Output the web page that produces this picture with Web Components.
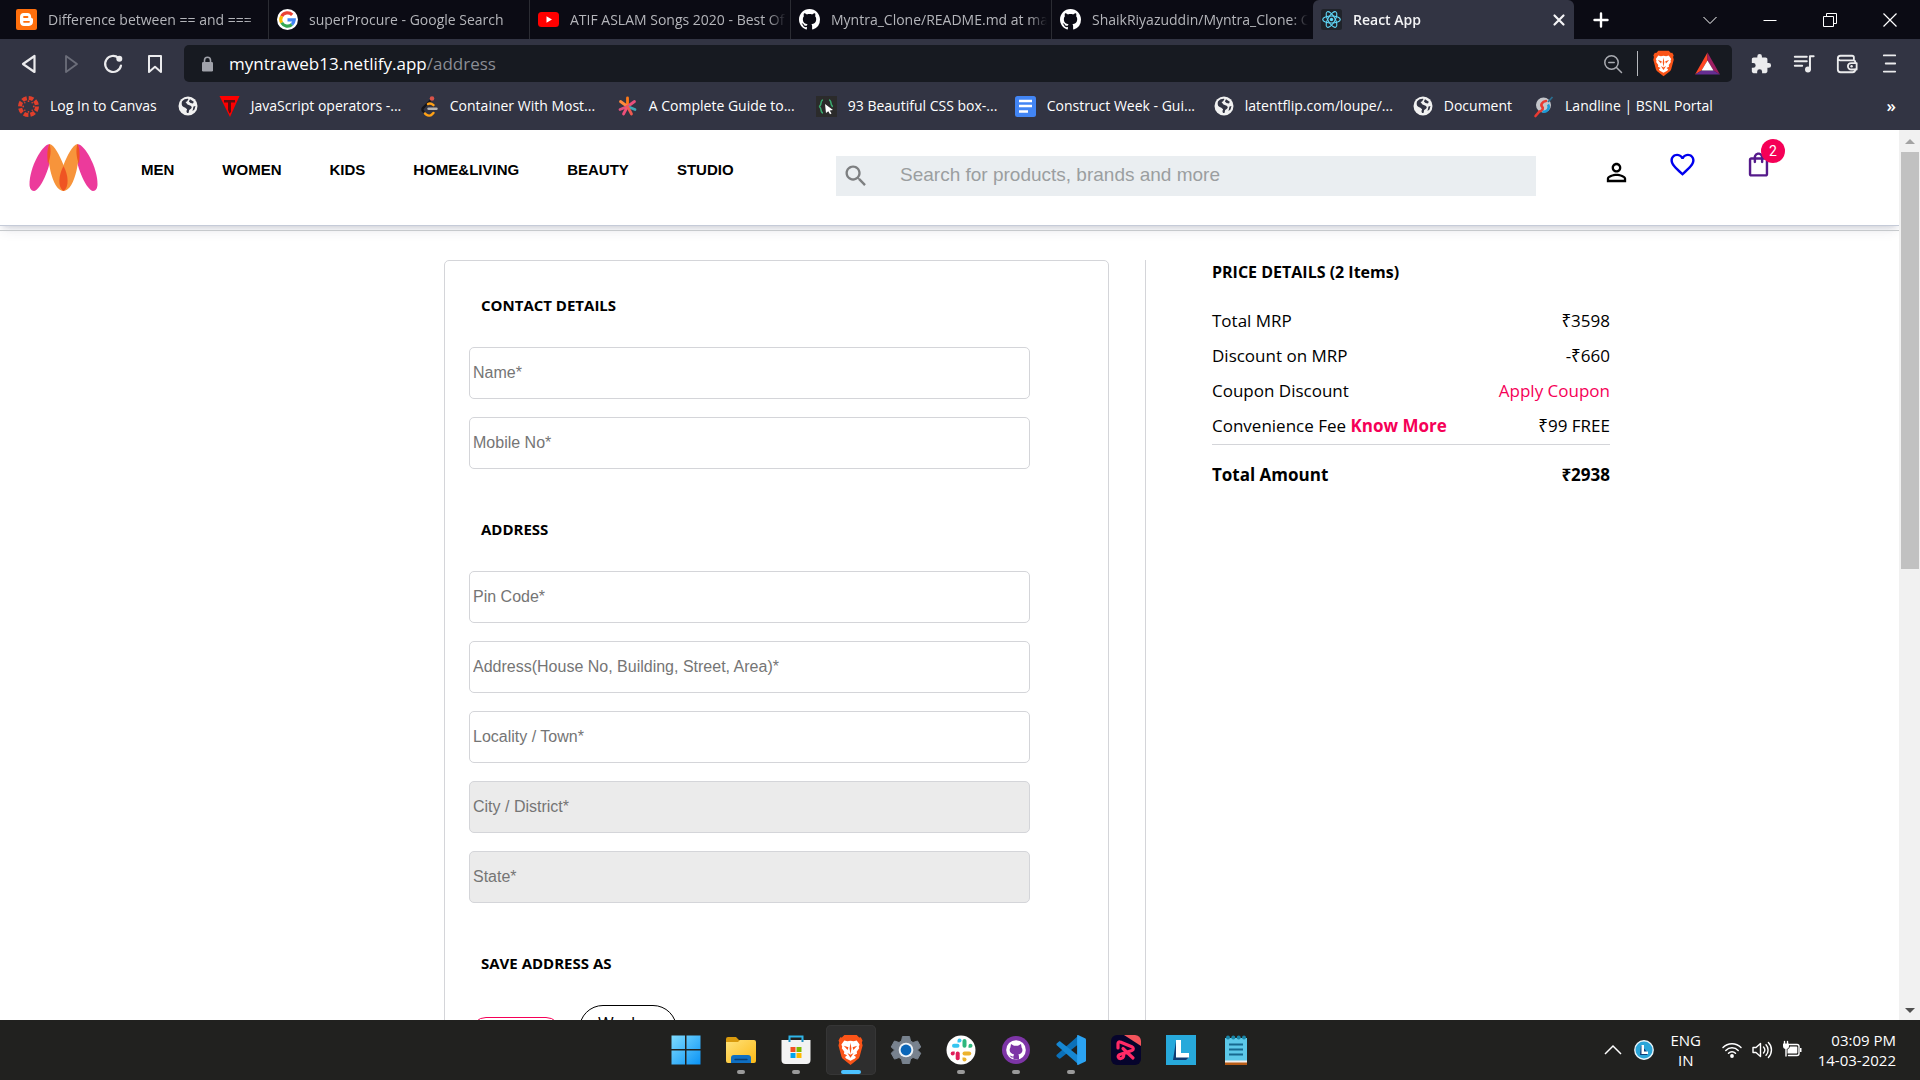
<!DOCTYPE html>
<html lang="en">
<head>
<meta charset="utf-8">
<title>React App</title>
<style>
  html, body { margin: 0; height: 100%; }
  body { font-family: "Open Sans", "Noto Sans", sans-serif; overflow: hidden; background: #fff; }
</style>
</head>
<body>
<desktop-screen></desktop-screen>
<script>
const githubPath = 'M8 0C3.58 0 0 3.58 0 8c0 3.54 2.29 6.53 5.47 7.59.4.07.55-.17.55-.38 0-.19-.01-.82-.01-1.49-2.01.37-2.53-.49-2.69-.94-.09-.23-.48-.94-.82-1.13-.28-.15-.68-.52-.01-.53.63-.01 1.08.58 1.23.82.72 1.21 1.87.87 2.33.66.07-.52.28-.87.51-1.07-1.78-.2-3.64-.89-3.64-3.95 0-.87.31-1.59.82-2.15-.08-.2-.36-1.02.08-2.12 0 0 .67-.21 2.2.82.64-.18 1.32-.27 2-.27.68 0 1.36.09 2 .27 1.53-1.04 2.2-.82 2.2-.82.44 1.1.16 1.92.08 2.12.51.56.82 1.27.82 2.15 0 3.07-1.87 3.75-3.65 3.95.29.25.54.73.54 1.48 0 1.07-.01 1.93-.01 2.2 0 .21.15.46.55.38A8.013 8.013 0 0016 8c0-4.42-3.58-8-8-8z';
const line = 'fill="none" stroke="currentColor" stroke-linejoin="round" stroke-linecap="round"';
const slackMark = `
  <path d="M11.5 5.5a2 2 0 1 1 2 2h-2z" fill="#36c5f0"/><rect x="6" y="8.700" width="7.500" height="4" rx="2" fill="#36c5f0"/>
  <path d="M22.500 10.700a2 2 0 1 1 2 2h-2z" fill="#2eb67d"/><rect x="16.500" y="4" width="4" height="8.700" rx="2" fill="#2eb67d"/>
  <path d="M18.500 22.500a2 2 0 1 1-2 2v-2z" fill="#ecb22e"/><rect x="16.500" y="16.500" width="8.700" height="4" rx="2" fill="#ecb22e"/>
  <path d="M8.700 16.500v2a2 2 0 1 1-2-2z" fill="#e01e5a"/><rect x="9.700" y="16.500" width="4" height="8.700" rx="2" fill="#e01e5a"/>`;
const globe = `<circle cx="10" cy="10" r="9.500" fill="#f1f1f1"/>
  <path d="M4 5.500C6 3 9 2.500 10.500 3L9 5.500 7.500 6 9.500 8.500l2.500 1c1.500.6 2.500 2 1 3.300l-1.800 1.200-.7 3c-1.500.4-2-.6-2-2l.6-1.800L7 11.500C4.500 11 3 9 4 5.500z" fill="#323443"/>
  <path d="M12 3.300l3.800 2.400-.8 1.800-2.500-.4-1.600-1.600zM15.500 10.500l2-.4-1 3.500-2 1.500z" fill="#323443"/>`;
const lion = `<path d="M12 0h6.500l2.600 2.500 1.700-.3 1.800 3-.7 2 .8 3-3.200 10.800c-.3 1-1 1.800-2 2.500L12 29l-7.500-5.500c-1-.7-1.700-1.500-2-2.500L-.700 10.200l.8-3-.7-2 1.800-3 1.700.3L5.500 0z" transform="translate(1 0) scale(.92 1)" fill="#fb5418"/>
  <path d="M12 5.500l3 .6 3-.8 2.800 4-.8 2 .4 1.600-2.400 3.400.3 1.800-3 1.500 2 1.600-1 1.500L12 25l-4.300-2.300-1-1.500 2-1.600-3-1.500.3-1.800-2.400-3.400.4-1.600-.8-2 2.800-4 3 .8z" fill="#fff"/>
  <path d="M5.500 10.500l4.500 1.300-.8 2.600zM18.500 10.500L14 11.800l.8 2.600zM12 7.500l.9 5.500-.9 5.500-.9-5.500zM9 17.300l3 1.700 3-1.700-2.200 3.400L12 22l-.8-1.300z" fill="#fb5418"/>`;

const icons = {
  blogger: ['0 0 21 21', `<rect width="21" height="21" rx="2" fill="#ff6f0c"/><path d="M7.500 4h4c2.400 0 3.600 1.600 3.600 3.500 0 1 .2 1.500 1 1.700.6.100.9.500.9 1.100v2.500c0 2.300-1.700 4.200-4 4.200H8c-2.300 0-4-1.800-4-4.100V7.800C4 5.600 5.500 4 7.500 4z" fill="#fff"/><path d="M8 8h3.500M8 12.800h5" stroke="#ff6f0c" stroke-width="1.800" stroke-linecap="round"/>`],
  google: ['0 0 21 21', `<circle cx="10.500" cy="10.500" r="10.500" fill="#fff"/><g fill="none" stroke-width="3.200"><path d="M15.200 5.800A6.700 6.700 0 0 0 4.700 7.200" stroke="#ea4335"/><path d="M4.700 7.200a6.700 6.700 0 0 0 0 6.600" stroke="#fbbc05"/><path d="M4.700 13.800a6.700 6.700 0 0 0 10.200 1.700" stroke="#34a853"/><path d="M14.900 15.500a6.700 6.700 0 0 0 2.300-4.600h-6.700" stroke="#4285f4"/></g>`],
  youtube: ['0 0 21 21', `<rect y="3" width="21" height="15" rx="3.500" fill="#f00"/><path d="M8.500 7.200l5.500 3.300-5.500 3.300z" fill="#fff"/>`],
  github: ['0 0 16 16', `<path fill="#fff" d="${githubPath}"/>`],
  react: ['0 0 21 21', `<rect width="21" height="21" rx="2.500" fill="#20232a"/><g fill="none" stroke="#61dafb" stroke-width="1.100"><ellipse cx="10.500" cy="10.500" rx="8.800" ry="3.500"/><ellipse cx="10.500" cy="10.500" rx="8.800" ry="3.500" transform="rotate(60 10.500 10.500)"/><ellipse cx="10.500" cy="10.500" rx="8.800" ry="3.500" transform="rotate(120 10.500 10.500)"/></g><circle cx="10.500" cy="10.500" r="1.700" fill="#61dafb"/>`],
  close: ['0 0 12 12', `<path ${line} stroke-width="2.200" d="M1.500 1.500l9 9M10.500 1.500l-9 9"/>`],
  plus: ['0 0 16 16', `<path ${line} stroke-width="2.400" d="M8 1.500v13M1.500 8h13"/>`],
  down: ['0 0 14 14', `<path fill="none" stroke="currentColor" d="M.5 4l6.500 6.500L13.500 4"/>`],
  minimise: ['0 0 14 14', `<path fill="none" stroke="currentColor" d="M.5 7.500h13"/>`],
  restore: ['0 0 14 14', `<path fill="none" stroke="currentColor" d="M.5 3.500h10v10H.5zM3.500 3V.5h10v10H11"/>`],
  exit: ['0 0 14 14', `<path fill="none" stroke="currentColor" stroke-width="1.200" d="M.5.5l13 13M13.500.5l-13 13"/>`],
  back: ['0 0 20 20', `<path ${line} stroke-width="2.200" d="M15.500 2v16L4 10z"/>`],
  forward: ['0 0 20 20', `<path ${line} stroke-width="1.800" d="M5 2v16l11-8z"/>`],
  reload: ['0 0 20 20', `<path ${line} stroke-width="2.200" d="M15.500 4A8 8 0 1 0 18 11.500"/><circle cx="16.300" cy="4.700" r="3" fill="currentColor"/>`],
  mark: ['0 0 20 20', `<path ${line} stroke-width="2" d="M4 2h12v16l-6-5.200L4 18z"/>`],
  lock: ['0 0 13 16', `<rect x="1" y="6" width="11" height="9.500" rx="1.200" fill="currentColor"/><path d="M3.500 6.500V4.300a3 3 0 0 1 6 0v2.200" fill="none" stroke="currentColor" stroke-width="1.600"/>`],
  zoomout: ['0 0 20 20', `<g ${line} stroke-width="1.500"><circle cx="8.500" cy="8.500" r="6.700"/><path d="M5.800 8.500h5.400M13.500 13.500l5 5"/></g>`],
  brave: ['0 0 24 29', lion],
  bat: ['0 0 25 22', `<path d="M12.500 0L0 22l6.500-4 6-10z" fill="#ff4724"/><path d="M12.500 0L25 22l-6.500-4-6-10z" fill="#9e1f63"/><path d="M0 22h25l-6.500-4h-12z" fill="#662d91"/><path d="M12.500 8l6 10h-12z" fill="#fff"/>`],
  puzzle: ['0 0 24 24', `<path fill="currentColor" d="M20.500 11H19V7c0-1.100-.9-2-2-2h-4V3.500a2.500 2.500 0 0 0-5 0V5H4c-1.100 0-2 .9-2 2v3.800h1.500a2.700 2.700 0 0 1 0 5.400H2V20c0 1.100.9 2 2 2h3.800v-1.500a2.700 2.700 0 0 1 5.400 0V22H17c1.100 0 2-.9 2-2v-4h1.500a2.500 2.500 0 0 0 0-5z"/>`],
  music: ['0 0 24 24', `<path ${line} stroke-width="2.200" d="M2 4h13M2 9h13M2 14h8M18.500 18V3.500h4"/><circle cx="16.300" cy="18" r="3.200" fill="currentColor"/>`],
  wallet: ['0 0 24 24', `<g ${line} stroke-width="2"><path d="M19.500 8V5a2 2 0 0 0-2-2H5a3 3 0 0 0-3 3v12a3 3 0 0 0 3 3h13a3 3 0 0 0 3-3M2 6A2.500 2.500 0 0 0 4.500 8H19a2 2 0 0 1 2 2v1"/><path d="M22.500 11h-6a3.500 3.500 0 0 0 0 7h6z"/></g><circle cx="17" cy="14.500" r="1.300" fill="currentColor"/>`],
  menu: ['0 0 20 20', `<path ${line} stroke-width="1.900" d="M4 1.500h12M6 10h10M4 18.500h12"/>`],
  canvas: ['0 0 21 21', `<circle cx="10.500" cy="10.500" r="8.500" fill="none" stroke="#e13f2b" stroke-width="4" stroke-dasharray="4.700 1.970"/><g fill="#e13f2b"><circle cx="10.500" cy="5.200" r=".9"/><circle cx="10.500" cy="15.800" r=".9"/><circle cx="5.200" cy="10.500" r=".9"/><circle cx="15.800" cy="10.500" r=".9"/><circle cx="6.800" cy="6.800" r=".8"/><circle cx="14.200" cy="6.800" r=".8"/><circle cx="6.800" cy="14.200" r=".8"/><circle cx="14.200" cy="14.200" r=".8"/></g>`],
  globe: ['0 0 20 20', globe],
  tee: ['0 0 21 21', `<path d="M.5 0h20L11 21z" fill="#f00"/><path d="M5 4h11v2.500h-4V16L10.500 17.500 9 14V6.500H5z" fill="#5d0d10"/>`],
  leet: ['0 0 21 21', `<g fill="none" stroke-linecap="round" stroke-width="2.400"><path d="M12 5L5 12" stroke="#15161c"/><path d="M5 12c-1.200 1.300-.5 2.700.6 3.700" stroke="#15161c"/><path d="M7 17.500l1.500 1.300c1.500 1.200 4 1.200 5.500-.4l1.500-1.500" stroke="#ffa116"/><path d="M10 8c1.500-1 3.500-.6 5.500 1.200" stroke="#ffa116"/><path d="M10.500 12.800h8" stroke="#b3b3b3"/></g><circle cx="14" cy="2.500" r="2.300" fill="#d9534a"/>`],
  star: ['0 0 21 21', `<g stroke-width="2.800" stroke-linecap="round"><path d="M10.500 2v7" stroke="#ff7a18"/><path d="M10.500 10.500L3.500 5.500" stroke="#ff8a3c"/><path d="M10.500 10.500l7-5" stroke="#e94f7c"/><path d="M10.500 10.500l-7.500 3" stroke="#d9527c"/><path d="M10.500 10.500l7.500 3" stroke="#3fa7b5"/><path d="M10.500 10.500L6.500 18" stroke="#f0507a"/><path d="M10.500 10.500l4 7.500" stroke="#ef5a50"/></g>`],
  braces: ['0 0 21 21', `<rect width="21" height="21" fill="#2b2b2b"/><g fill="none" stroke="#3aa76d" stroke-width="1.500"><path d="M7 4C4 4 6 10 3 10.500 6 11 4 17 7 17M13 4c3 0 1 6 4 6.500"/></g><path d="M9 8l8 6-3.300.5 1.800 3-1.500.8-1.700-3L10 17z" fill="#fff"/>`],
  docs: ['0 0 21 21', `<rect width="21" height="21" rx="2.500" fill="#4285f4"/><path d="M4 5h13M4 10h13M4 15.500h9" stroke="#fff" stroke-width="2.300"/>`],
  bsnl: ['0 0 21 21', `<circle cx="10.500" cy="9" r="7.500" fill="#c3c5ca"/><path d="M13 5C9 5.500 7.500 9 9 10.500s1 4-2.500 5L2.500 20" fill="none" stroke="#e83a32" stroke-width="2.600" stroke-linecap="round"/><path d="M9.500 15.500c4 1 8-3 5.500-7" fill="none" stroke="#1b9ad6" stroke-width="2.400"/><path d="M15 6l4.500-5" stroke="#2b6f91" stroke-width="1.800"/>`],
  myntra: ['0 0 68 47', `<g><path d="M20 0C12 1 0 24 0 40c0 4 1.500 7 4.500 7C10 47 21 25 21.500 9 21.500 4 21 1 20 0z" fill="#ec3a9b"/><path d="M48 0c8 1 20 24 20 40 0 4-1.500 7-4.500 7C58 47 47 25 46.500 9 46.500 4 47 1 48 0z" fill="#ec3a9b"/><path d="M20 0c-4 9 2 47 14 47 5-1 6-17 0-26C30 11 25 1 20 0z" fill="#f7943b"/><path d="M48 0c4 9-2 47-14 47-5-1-6-17 0-26C38 11 43 1 48 0z" fill="#f7943b"/><path d="M20 0c-2.500 5-2.500 11-1.500 20 2.500-6 3.500-14 1.500-20zM48 0c2.500 5 2.500 11 1.500 20C47 14 46 6 48 0zM34 22c-5 9-6 21 0 25 6-4 5-16 0-25z" fill="#ef5423"/></g>`],
  search: ['0 0 24 24', `<path fill="currentColor" d="M15.500 14h-.79l-.28-.27C15.410 12.590 16 11.110 16 9.500 16 5.910 13.090 3 9.500 3S3 5.910 3 9.500 5.910 16 9.500 16c1.610 0 3.090-.59 4.230-1.570l.27.28v.79l5 4.990L20.490 19l-4.990-5zm-6 0C7.010 14 5 11.990 5 9.500S7.010 5 9.500 5 14 7.010 14 9.500 11.990 14 9.500 14z"/>`],
  person: ['0 0 24 24', `<path fill="currentColor" d="M12 5.900c1.160 0 2.100.94 2.100 2.100s-.94 2.100-2.100 2.100S9.900 9.160 9.900 8s.94-2.100 2.100-2.100m0 9c2.970 0 6.100 1.460 6.100 2.100v1.100H5.900V17c0-.64 3.130-2.100 6.100-2.100M12 4C9.790 4 8 5.790 8 8s1.790 4 4 4 4-1.790 4-4-1.790-4-4-4zm0 9c-2.670 0-8 1.340-8 4v3h16v-3c0-2.660-5.330-4-8-4z"/>`],
  heart: ['0 0 24 24', `<path fill="currentColor" d="M16.500 3c-1.740 0-3.410.81-4.500 2.090C10.910 3.810 9.240 3 7.500 3 4.420 3 2 5.420 2 8.500c0 3.780 3.400 6.860 8.550 11.540L12 21.350l1.450-1.320C18.600 15.360 22 12.280 22 8.500 22 5.420 19.580 3 16.500 3zm-4.400 15.550l-.1.100-.1-.1C7.140 14.240 4 11.390 4 8.500 4 6.500 5.500 5 7.500 5c1.540 0 3.040.99 3.570 2.360h1.870C13.460 5.990 14.960 5 16.500 5c2 0 3.500 1.500 3.500 3.500 0 2.890-3.140 5.740-7.900 10.050z"/>`],
  bag: ['0 0 24 24', `<path fill="currentColor" d="M18 6h-2c0-2.210-1.790-4-4-4S8 3.790 8 6H6c-1.100 0-2 .9-2 2v12c0 1.100.9 2 2 2h12c1.100 0 2-.9 2-2V8c0-1.100-.9-2-2-2zm-6-2c1.100 0 2 .9 2 2h-4c0-1.100.9-2 2-2zm6 16H6V8h2v2c0 .55.45 1 1 1s1-.45 1-1V8h4v2c0 .55.45 1 1 1s1-.45 1-1V8h2v12z"/>`],
  windows: ['0 0 30 30', `<defs><linearGradient id="w" x1="0" y1="0" x2="1" y2="1"><stop offset="0" stop-color="#7fdcff"/><stop offset="1" stop-color="#0a93f5"/></linearGradient></defs><path d="M.5.5H14V14H.5zM15.500.5H29.500V14H15.500zM.5 15.500H14V29.500H.5zM15.500 15.500H29.500V29.500H15.500z" fill="url(#w)"/>`],
  folder: ['0 0 30 30', `<path d="M0 4a2 2 0 0 1 2-2h8l3 3h12v8H0z" fill="#d99a0d"/><defs><linearGradient id="f" x1="0" y1="0" x2="1" y2="1"><stop offset="0" stop-color="#ffe27a"/><stop offset="1" stop-color="#fbb916"/></linearGradient></defs><path d="M0 7h12l2-2h14a2 2 0 0 1 2 2v19a2 2 0 0 1-2 2H2a2 2 0 0 1-2-2z" fill="url(#f)"/><path d="M5 28v-5a3 3 0 0 1 3-3h14a3 3 0 0 1 3 3v5z" fill="#0f6fc2"/><path d="M9 24.500h12" stroke="#083f73" stroke-width="1.300" stroke-linecap="round"/>`],
  store: ['0 0 30 30', `<path d="M8.500 7V1.500h13V7" fill="none" stroke="#2fb5e8" stroke-width="2"/><path d="M.5 5h29v20a4 4 0 0 1-4 4h-21a4 4 0 0 1-4-4z" fill="#f3f3f3"/><path d="M9.500 12h5v5h-5z" fill="#f25022"/><path d="M15.500 12h5v5h-5z" fill="#7fba00"/><path d="M9.500 18h5v5h-5z" fill="#00a4ef"/><path d="M15.500 18h5v5h-5z" fill="#ffb900"/><path d="M8.500 4.500V7M21.500 4.500V7" stroke="#1c8fc2" stroke-width="2"/>`],
  gear: ['0 0 30 30', `<path d="M11.500 1.500h7l1 4.500 2.500 1.500L26.500 6l3.300 6-3.400 3 3.400 3.200-3.300 5.900L22 22.500 19.500 24l-1 4.500h-7l-1-4.500L8 22.500l-4.500 1.600L.2 18.200 3.600 15 .2 12l3.300-6L8 7.500 10.500 6z" fill="#78828e" stroke="#78828e" stroke-linejoin="round"/><circle cx="15" cy="15" r="7.300" fill="#eef3f7"/><circle cx="15" cy="15" r="5.400" fill="#0a66b8"/>`],
  slack: ['0 0 30 30', `<circle cx="15" cy="15" r="14.500" fill="#fff"/>${slackMark}`],
  ghdesk: ['0 0 30 30', `<circle cx="15" cy="15" r="14" fill="#7d35a6"/><circle cx="15" cy="15" r="9.800" fill="#fff"/><path d="M10 9l3 1.700h4L20 9l.6 3.500c2 3 .3 6.500-3.300 7 .8 1 .7 2 .7 5h-5.500v-2c-2.500.5-2.800-1-4-2 1.500-.3 2 1.300 4 1 0-.8.2-1.500.6-2-4-.6-5.500-4-3.700-7z" fill="#7d35a6"/>`],
  vscode: ['0 0 30 30', `<path d="M22 1L1 19.500c-.8.7-.8 1.500-.1 2.200l1.800 1.600c.6.500 1.300.5 1.900 0L22 9.500z" fill="#0b70b8"/><path d="M22 29L1 10.500c-.8-.7-.8-1.500-.1-2.200l1.800-1.600c.6-.5 1.300-.5 1.900 0L22 20.500z" fill="#1687d2"/><path d="M22 0l7 3.300c.6.300 1 .8 1 1.500v20.400c0 .7-.4 1.200-1 1.500L22 30c-.6.200-.9-.2-.9-.8V.8c0-.6.300-1 .9-.8z" fill="#2ba3f2"/>`],
  recorder: ['0 0 30 30', `<rect width="30" height="30" rx="6" fill="#06042c"/><path d="M13 0h11a6 6 0 0 1 6 6v5z" fill="#f3545b"/><path d="M7 13V8.500c0-1.500 1-2 2.300-1.400l11.500 4.600c2 1 2 3 0 3.800L9 19.500c-3 1.300-2 4.500 1 4 3-.6 3-3 2.500-5M12 13.500l10 9.500" fill="none" stroke="#ff2a66" stroke-width="3.200" stroke-linecap="round" stroke-linejoin="round"/>`],
  ell: ['0 0 30 30', `<path d="M0 0h30v30H0z" fill="#27a9db"/><path d="M10 6L7 25h13l3-3-11-1z" fill="#103b73"/><path d="M10 5h5v13h8v4.500H10z" fill="#fff"/>`],
  notepad: ['0 0 30 30', `<path d="M4 26h22v4H4z" fill="#b85c16"/><path d="M4 25h22v2.500H4z" fill="#eee"/><path d="M4 3h22v22.500H4z" fill="#5cc8e8"/><path d="M8 9.500h14M8 14.500h14M8 19.500h14" stroke="#17698f" stroke-width="1.800"/><g fill="#1a86a8"><circle cx="7" cy="2.500" r="2"/><circle cx="12.300" cy="2.500" r="2"/><circle cx="17.700" cy="2.500" r="2"/><circle cx="23" cy="2.500" r="2"/></g>`],
  up: ['0 0 18 18', `<path fill="none" stroke="currentColor" stroke-width="1.500" d="M1 13l8-8 8 8"/>`],
  ellring: ['0 0 20 20', `<circle cx="10" cy="10" r="9.200" fill="#2aa5d8" stroke="#e8f4fa" stroke-width="1.400"/><path d="M7 5l-1 10h7l1-2z" fill="#123c74"/><path d="M7.500 5H10v6.500h4V14H7.500z" fill="#fff"/>`],
  wifi: ['0 0 20 20', `<g ${line} stroke-width="1.500"><path d="M1 7.500a12.500 12.500 0 0 1 18 0M3.800 10.500a8.600 8.600 0 0 1 12.400 0M6.500 13.300a5 5 0 0 1 7 0"/></g><circle cx="10" cy="16" r="1.900" fill="currentColor"/>`],
  volume: ['0 0 20 20', `<g ${line} stroke-width="1.400"><path d="M1 7.500h3L8.500 3.500v13L4 12.500H1zM11.500 7a4.500 4.500 0 0 1 0 6M14 4.800a7.500 7.500 0 0 1 0 10.400M16.400 2.600a10.500 10.500 0 0 1 0 14.800"/></g>`],
  battery: ['0 0 20 20', `<path ${line} stroke-width="1.400" d="M7.500 4.500H15a2 2 0 0 1 2 2v7a2 2 0 0 1-2 2H6.500"/><path d="M8 6.500h6.500a.8.800 0 0 1 .8.800v5.400a.8.800 0 0 1-.8.800H5.500V9.500A4 4 0 0 0 8 6.500zM18 8h1.500v4H18zM1 3.500h6V6a3 3 0 0 1-6 0z" fill="currentColor"/><path ${line} stroke-width="1.400" d="M2.500 1.500v2M5.500 1.500v2M4 8v8"/>`]
};

/* Base class: clones the markup of each component into an open shadow root. */
class Base extends HTMLElement {
  connectedCallback() {
    if (this.shadowRoot) return;
    const t = document.createElement('template');
    t.innerHTML = `<style>*{box-sizing:border-box}button{font:inherit;color:inherit;background:none;border:0;padding:0;margin:0}a{color:inherit;text-decoration:none}</style>` + this.render();
    this.attachShadow({ mode: 'open' }).append(t.content.cloneNode(true));
  }
  at(name) { return this.getAttribute(name) || ''; }
}

customElements.define('ui-icon', class extends Base {
  render() {
    const [box, body] = icons[this.at('name')];
    return `<style>:host{display:block;flex:none;width:20px;height:20px}svg{display:block;width:100%;height:100%;overflow:visible}</style><svg viewBox="${box}" aria-hidden="true">${body}</svg>`;
  }
});

customElements.define('browser-tab', class extends Base {
  render() {
    const on = this.hasAttribute('active');
    return `<style>
      :host{display:flex;flex:0 1 261px;min-width:0;box-sizing:border-box;align-items:center;padding:0 4px 0 8px;color:#b4b5ba;font-size:14px;line-height:20px;border-right:1px solid #2b2c33}
      :host([active]){padding-right:8px;background:#323443;color:#f4f4f6;font-weight:600;border-radius:6px 6px 0 0;border-color:transparent}
      :host([last]){border-color:transparent}
      .tab{display:flex;align-items:center;gap:11px;flex:1;min-width:0;text-align:left}
      .tab ui-icon{width:21px;height:21px}
      .text{flex:1;overflow:hidden;white-space:nowrap;mask-image:linear-gradient(to left,transparent 0,#000 18px)}
      .x ui-icon{width:12px;height:12px}
    </style><button class="tab" role="tab" aria-selected="${on}"><ui-icon name="${this.at('icon')}"></ui-icon><span class="text"><slot></slot></span></button>
    ${on ? '<button class="x" aria-label="Close tab"><ui-icon name="close"></ui-icon></button>' : ''}`;
  }
});

customElements.define('tab-strip', class extends Base {
  render() {
    return `<style>
      :host{display:flex;height:39px;background:#0b0b14;padding-left:8px;color:#fff}
      .tabs{display:flex;flex:0 1 1566px;min-width:0}
      button{display:grid;place-items:center}
      .new{width:54px}.new ui-icon{width:16px;height:16px}
      .win{display:flex;margin-left:auto}.win button{width:60px}.win ui-icon{width:14px;height:14px}
    </style>
    <div class="tabs" role="tablist">
      <browser-tab icon="blogger">Difference between == and ===</browser-tab>
      <browser-tab icon="google">superProcure - Google Search</browser-tab>
      <browser-tab icon="youtube">ATIF ASLAM Songs 2020 - Best Of</browser-tab>
      <browser-tab icon="github">Myntra_Clone/README.md at mai</browser-tab>
      <browser-tab icon="github" last>ShaikRiyazuddin/Myntra_Clone: C</browser-tab>
      <browser-tab icon="react" active>React App</browser-tab>
    </div>
    <button class="new" aria-label="New tab"><ui-icon name="plus"></ui-icon></button>
    <div class="win">
      <button aria-label="Search tabs"><ui-icon name="down"></ui-icon></button>
      <button aria-label="Minimise"><ui-icon name="minimise"></ui-icon></button>
      <button aria-label="Restore"><ui-icon name="restore"></ui-icon></button>
      <button aria-label="Close"><ui-icon name="exit"></ui-icon></button>
    </div>`;
  }
});

customElements.define('address-bar', class extends Base {
  render() {
    return `<style>
      :host{display:flex;align-items:center;padding:6px 9px 6px 8px;background:#323443;color:#ebebed}
      button{display:grid;place-items:center;height:37px}
      .nav,.tools{display:flex}.nav button{width:42px}.tools button{width:43px}
      .tools ui-icon{width:22px;height:22px}.tools .m{width:19px;height:19px}
      .off{color:#6c6e7a}
      .bar{display:flex;flex:1;align-items:center;height:37px;margin:0 7px 0 8px;padding:0 12px 0 17px;border-radius:5px;background:#171a21}
      .lock{width:13px;height:16px;color:#a0a2aa}
      .url{flex:1;margin-left:15px;font-size:17px;line-height:24px;white-space:nowrap;color:#8b8d94}
      .url b{font-weight:400;color:#fff}
      .line{width:1px;height:25px;margin:0 15px 0 14px;background:#b6b8bd}
      .zoom{color:#a9abb1}
      .lion{width:21px;height:27px}.bat{width:25px;height:23px;margin-left:21px}
    </style>
    <div class="nav">
      <button aria-label="Back"><ui-icon name="back"></ui-icon></button>
      <button aria-label="Forward" class="off"><ui-icon name="forward"></ui-icon></button>
      <button aria-label="Reload"><ui-icon name="reload"></ui-icon></button>
      <button aria-label="Bookmark"><ui-icon name="mark"></ui-icon></button>
    </div>
    <div class="bar">
      <ui-icon class="lock" name="lock"></ui-icon>
      <div class="url" role="textbox" aria-label="Address" contenteditable="true" spellcheck="false"><b>myntraweb13.netlify.app</b>/address</div>
      <button aria-label="Zoom"><ui-icon class="zoom" name="zoomout"></ui-icon></button>
      <span class="line"></span>
      <button aria-label="Shields"><ui-icon class="lion" name="brave"></ui-icon></button>
      <button aria-label="Rewards"><ui-icon class="bat" name="bat"></ui-icon></button>
    </div>
    <div class="tools">
      <button aria-label="Extensions"><ui-icon name="puzzle"></ui-icon></button>
      <button aria-label="Playlist"><ui-icon name="music"></ui-icon></button>
      <button aria-label="Wallet"><ui-icon name="wallet"></ui-icon></button>
      <button aria-label="Menu"><ui-icon class="m" name="menu"></ui-icon></button>
    </div>`;
  }
});

customElements.define('book-mark', class extends Base {
  render() {
    return `<style>
      :host{display:block;flex:none}:host([wide]){flex:0 1 178px;min-width:0}
      a{display:flex;align-items:center;gap:11px;white-space:nowrap}
      ui-icon{width:21px;height:21px}:host([icon=globe]) ui-icon{width:20px;height:20px}
    </style><a href="#" aria-label="Bookmark"><ui-icon name="${this.at('icon')}"></ui-icon><slot></slot></a>`;
  }
});

customElements.define('bookmark-bar', class extends Base {
  render() {
    return `<style>
      :host{display:flex;align-items:center;gap:21px;height:42px;box-sizing:border-box;padding:0 24px 6px 18px;background:#323443;color:#fff;font-size:14px;line-height:20px}
      .more{margin-left:auto;font-size:17px;font-weight:600}
    </style>
    <book-mark icon="canvas">Log In to Canvas</book-mark>
    <book-mark icon="globe"></book-mark>
    <book-mark wide icon="tee">JavaScript operators -...</book-mark>
    <book-mark wide icon="leet">Container With Most...</book-mark>
    <book-mark wide icon="star">A Complete Guide to...</book-mark>
    <book-mark wide icon="braces">93 Beautiful CSS box-...</book-mark>
    <book-mark wide icon="docs">Construct Week - Gui...</book-mark>
    <book-mark wide icon="globe">latentflip.com/loupe/...</book-mark>
    <book-mark icon="globe">Document</book-mark>
    <book-mark icon="bsnl">Landline | BSNL Portal</book-mark>
    <button class="more" aria-label="More bookmarks">»</button>`;
  }
});

customElements.define('shop-header', class extends Base {
  render() {
    return `<style>
      :host{display:flex;align-items:flex-start;height:96px;box-sizing:border-box;padding:0 126px 0 29px;background:#fff;border-bottom:1px solid #c5cbd8;font-family:"Liberation Sans",Arial,sans-serif;
        box-shadow:rgba(50,50,93,.1) 0 6px 12px -2px,rgba(50,60,93,.22) 0 3px 7px -3px}
      .logo{margin-top:14px}.logo ui-icon{width:69px;height:47px}
      nav{display:flex;gap:48px;margin:30px 32px 0 43px;font-size:15px;font-weight:700;line-height:20px;color:#000;white-space:nowrap}
      .search{display:flex;align-items:center;flex:0 1 700px;height:40px;margin:26px 66px 0 auto;padding:0 6px;background:#eaeef1}
      .search ui-icon{width:28px;height:28px;color:#7d7f81}
      input{flex:1;min-width:0;height:40px;margin-left:30px;padding:0 0 3px;border:0;background:none;outline:0;font:19px/24px "Liberation Sans",Arial,sans-serif}
      input::placeholder{color:#9b9ea0;opacity:1}
      .actions{display:flex;gap:37px;height:37px;margin-top:20px}
      .actions ui-icon{width:29px;height:29px}
      .user{align-self:flex-end;color:#000}.wish{color:#00e}
      .bag{position:relative;margin-left:10px;color:#551a8b;height:29px}
      .badge{position:absolute;top:-11px;right:-12px;width:24px;height:24px;border-radius:12px;background:#f50057;color:#fff;font:14px/24px Roboto,sans-serif;text-align:center}
    </style>
    <a class="logo" href="#" aria-label="Home"><ui-icon name="myntra"></ui-icon></a>
    <nav><a href="#">MEN</a><a href="#">WOMEN</a><a href="#">KIDS</a><a href="#">HOME&amp;LIVING</a><a href="#">BEAUTY</a><a href="#">STUDIO</a></nav>
    <label class="search"><ui-icon name="search"></ui-icon><input type="text" aria-label="Search" placeholder="Search for products, brands and more"></label>
    <div class="actions">
      <a class="user" href="#" aria-label="Profile"><ui-icon name="person"></ui-icon></a>
      <a class="wish" href="#" aria-label="Wishlist"><ui-icon name="heart"></ui-icon></a>
      <a class="bag" href="#" aria-label="Bag"><ui-icon name="bag"></ui-icon><span class="badge">2</span></a>
    </div>`;
  }
});

customElements.define('form-field', class extends Base {
  render() {
    return `<style>
      :host{display:block}
      input{display:block;width:100%;height:52px;padding:0 2px 0 3px;border:1px solid #d4d5d9;border-radius:5px;background:#fff;font:16px/20px "Liberation Sans",Arial,sans-serif;outline:0}
      :host([filled]) input{background:#ebebeb}
      input::placeholder{color:#757575;opacity:1}
    </style><input type="text" aria-label="${this.at('label')}" placeholder="${this.at('label')}">`;
  }
});

customElements.define('field-group', class extends Base {
  render() {
    return `<style>
      :host{display:block;padding:0 78px 0 24px}
      h4{margin:0 0 32px 12px;font-size:15px;line-height:20px;font-weight:700}
      .list{display:grid;gap:18px}
    </style><h4>${this.at('heading')}</h4><div class="list"><slot></slot></div>`;
  }
});

customElements.define('address-form', class extends Base {
  render() {
    return `<style>
      :host{display:grid;align-content:start;gap:50px;padding:34px 0 60px;border:1px solid #d4d5d9;border-radius:5px;color:#000}
      .pills{display:flex;align-items:center;gap:18px;margin-left:2px;font-size:17px;line-height:24px}
      .pills button{border:1px solid #000;border-radius:24px;height:54px;padding:0 36px 18px 18px}
      .pills .on{height:30px;padding:0 20px;border-color:#f50057;color:#f50057;border-radius:15px}
    </style>
    <field-group heading="CONTACT DETAILS"><form-field label="Name*"></form-field><form-field label="Mobile No*"></form-field></field-group>
    <field-group heading="ADDRESS">
      <form-field label="Pin Code*"></form-field>
      <form-field label="Address(House No, Building, Street, Area)*"></form-field>
      <form-field label="Locality / Town*"></form-field>
      <form-field filled label="City / District*"></form-field>
      <form-field filled label="State*"></form-field>
    </field-group>
    <field-group heading="SAVE ADDRESS AS"><div class="pills"><button class="on" type="button">Home</button><button type="button">Work</button></div></field-group>`;
  }
});

customElements.define('price-row', class extends Base {
  render() {
    return `<style>:host{display:flex;justify-content:space-between;align-items:center}</style><span><slot></slot></span><span><slot name="amount"></slot></span>`;
  }
});

customElements.define('price-details', class extends Base {
  render() {
    return `<style>
      :host{display:block;padding-left:66px;border-left:1px solid #d4d5d9;color:#000;font-size:17px;line-height:25px}
      h4{margin:0 0 24px;font-size:16px;line-height:24px;font-weight:700}
      .rows{display:grid;gap:10px;padding-bottom:6px;border-bottom:1px solid #d4d5d9}
      .total{margin-top:17px;font-weight:700}
      a{color:#f50057}
    </style>
    <h4>PRICE DETAILS (2 Items)</h4>
    <div class="rows">
      <price-row>Total MRP<span slot="amount">₹3598</span></price-row>
      <price-row>Discount on MRP<span slot="amount">-₹660</span></price-row>
      <price-row>Coupon Discount<a slot="amount" href="#">Apply Coupon</a></price-row>
      <price-row>Convenience Fee <a href="#"><b>Know More</b></a><span slot="amount">₹99 FREE</span></price-row>
    </div>
    <price-row class="total">Total Amount<span slot="amount">₹2938</span></price-row>`;
  }
});

customElements.define('scroll-bar', class extends Base {
  render() {
    return `<style>
      :host{display:flex;flex-direction:column;flex:none;box-sizing:border-box;width:21px;padding:9px 1px 7px 2px;background:#f1f1f1;align-items:center}
      .up,.dn{width:0;height:0;border:5px solid transparent}
      .up{border-top:0;border-bottom-color:#a3a3a3}.dn{border-bottom:0;border-top-color:#505050}
      .track{flex:1;width:100%;padding:8px 0}.thumb{height:49.2%;background:#c1c1c1}
    </style><span class="up"></span><div class="track"><div class="thumb"></div></div><span class="dn"></span>`;
  }
});

customElements.define('shop-page', class extends Base {
  render() {
    return `<style>
      :host{display:flex;flex:1;min-height:0;background:#fff}
      .page{display:flex;flex-direction:column;flex:1;min-width:0;overflow:hidden}
      shop-header{flex:none}
      hr{flex:none;width:100%;height:1px;margin:4px 0 0;border:0;background:#c6c9cc;position:relative}
      .cols{display:grid;flex:none;grid-template-columns:444fr 665fr 36fr 465fr 289fr;padding-top:29px}
      address-form{grid-column:2}price-details{grid-column:4}
    </style>
    <div class="page"><shop-header></shop-header><hr><main class="cols"><address-form></address-form><price-details></price-details></main></div>
    <scroll-bar></scroll-bar>`;
  }
});

customElements.define('task-app', class extends Base {
  render() {
    return `<style>
      :host{display:block;box-sizing:border-box;width:55px;padding:5px 2px 0 3px}
      button{display:flex;flex-direction:column;align-items:center;width:50px;height:50px;padding-top:10px;border-radius:5px}
      :host([active]) button{background:#2e2e2e;box-shadow:inset 0 0 0 1px #363636}
      ui-icon{width:30px;height:30px}:host([active]) ui-icon{width:25px}
      i{width:8px;height:4px;margin-top:5px;border-radius:2px}
      :host([open]) i{background:#9a9a9a}:host([active]) i{width:20px;background:#4cc2ff}
    </style><button aria-label="${this.at('icon')}"><ui-icon name="${this.at('icon')}"></ui-icon><i></i></button>`;
  }
});

customElements.define('task-bar', class extends Base {
  render() {
    return `<style>
      :host{display:grid;grid-template-columns:1fr auto 1fr;flex:none;height:60px;background:#21211f;color:#fff;font-size:15px;line-height:20px}
      .apps{display:flex;grid-column:2}
      .tray{display:flex;align-items:center;justify-content:flex-end;padding-right:24px}
      .tray button{display:flex;align-items:center}
      .up{width:18px;height:18px}.ring{margin-left:12px}
      .lang{width:60px;margin:0 6px 0 2px;text-align:center}.status{gap:10px}
      .clock{margin-left:16px;text-align:right;white-space:nowrap}
      .lang,.clock{flex-direction:column;justify-content:center}
      .tray .clock{align-items:flex-end}
    </style>
    <div class="apps">
      <task-app icon="windows"></task-app><task-app open icon="folder"></task-app><task-app open icon="store"></task-app>
      <task-app active icon="brave"></task-app><task-app icon="gear"></task-app><task-app open icon="slack"></task-app>
      <task-app open icon="ghdesk"></task-app><task-app open icon="vscode"></task-app><task-app icon="recorder"></task-app>
      <task-app icon="ell"></task-app><task-app icon="notepad"></task-app>
    </div>
    <div class="tray">
      <button aria-label="Hidden icons"><ui-icon class="up" name="up"></ui-icon></button>
      <button aria-label="Launcher"><ui-icon class="ring" name="ellring"></ui-icon></button>
      <button class="lang"><span>ENG</span><span>IN</span></button>
      <button class="status" aria-label="Status"><ui-icon name="wifi"></ui-icon><ui-icon name="volume"></ui-icon><ui-icon name="battery"></ui-icon></button>
      <button class="clock"><span>03:09 PM</span><span>14-03-2022</span></button>
    </div>`;
  }
});

customElements.define('desktop-screen', class extends Base {
  render() {
    return `<style>:host{display:flex;flex-direction:column;height:100vh}tab-strip,address-bar,bookmark-bar{flex:none}</style>
    <tab-strip></tab-strip><address-bar></address-bar><bookmark-bar></bookmark-bar><shop-page></shop-page><task-bar></task-bar>`;
  }
});
</script>
</body>
</html>
